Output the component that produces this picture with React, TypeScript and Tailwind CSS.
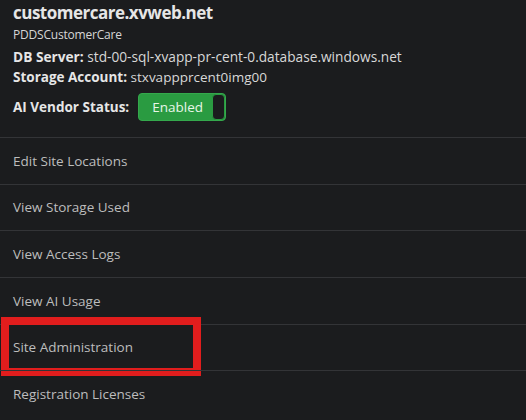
import React from 'react';

const menuItems = [
  'Edit Site Locations',
  'View Storage Used',
  'View Access Logs',
  'View AI Usage',
  'Site Administration',
  'Registration Licenses',
];

// Site details panel with an action list; one entry is highlighted by a red box
const App: React.FC = () => {
  return (
    <div className="w-[526px] h-[420px] overflow-hidden bg-[#1b1c1e] font-['Open_Sans',sans-serif]">
      {/* Header */}
      <div className="px-[13px] pb-[16px]">
        <h1 className="text-[17px] leading-[26px] tracking-[-0.5px] font-bold text-[#e6e6e6]">customercare.xvweb.net</h1>
        <p className="mt-[1px] text-[12px] leading-[16px] tracking-[-0.2px] text-[#d6d6d6]">PDDSCustomerCare</p>
        <p className="mt-[3px] text-[13.7px] leading-[21px] text-[#d8d8d8]">
          <span className="font-bold text-[#e6e6e6]">DB Server:</span> std-00-sql-xvapp-pr-cent-0.database.windows.net
        </p>
        <p className="text-[13.5px] leading-[21px] text-[#d8d8d8]">
          <span className="font-bold text-[#e6e6e6]">Storage Account:</span> stxvappprcent0img00
        </p>
        <div className="mt-[5px] flex items-center h-[28px] gap-[9px]">
          <span className="text-[13.5px] font-bold text-[#e6e6e6]">AI Vendor Status:</span>
          <div className="flex w-[88px] h-[28px] rounded-[4px] bg-[#2a9b41] border border-[#34a84c]">
            <span className="flex-1 flex items-center justify-center pl-[4px] text-[13.5px] text-[#e8f6e8]">Enabled</span>
            <span className="w-[13px] h-full rounded-[4px] bg-[#1b1c1e] border border-[#2a9b41]" />
          </div>
        </div>
      </div>

      {/* Menu */}
      <ul>
        {menuItems.map((item) => (
          <li
            key={item}
            className="relative h-[46.67px] border-t border-[#333437] px-[13px] flex items-center text-[13.5px] text-[#bdbdbd]"
          >
            {item}
            {item === 'Site Administration' && (
              <div className="absolute left-[1px] top-[-8px] w-[200px] h-[59px] border-[8px] border-[#e11d1d]" />
            )}
          </li>
        ))}
      </ul>
    </div>
  );
};

export default App;
